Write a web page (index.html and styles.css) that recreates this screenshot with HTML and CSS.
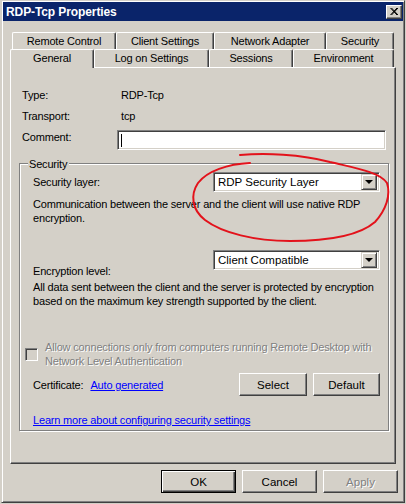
FILE: index.html
```html
<!DOCTYPE html>
<html lang="en">
<head>
    <meta charset="UTF-8">
    <title>RDP-Tcp Properties</title>
    <link rel="stylesheet" href="styles.css">
</head>
<body>
    <div class="window">
        <div class="titlebar">
            <span class="title">RDP-Tcp Properties</span>
            <span class="close-btn">
                <svg width="8" height="7" viewBox="0 0 8 7"><path d="M0.5,0 L7,7 M1.5,0 L8,7 M7,0 L0.5,7 M8,0 L1.5,7" stroke="#000" stroke-width="1" fill="none"/></svg>
            </span>
        </div>

        <div class="dialog">
            <!-- Tabs: back row and front row -->
            <div class="tabs">
                <div class="tab-row">
                    <div class="tab w-remote">Remote Control</div>
                    <div class="tab w-client">Client Settings</div>
                    <div class="tab w-network">Network Adapter</div>
                    <div class="tab w-security">Security</div>
                </div>
                <div class="tab-row front">
                    <div class="tab active w-general">General</div>
                    <div class="tab w-logon">Log on Settings</div>
                    <div class="tab w-sessions">Sessions</div>
                    <div class="tab w-env">Environment</div>
                </div>
            </div>

            <div class="panel">
                <div class="info-grid">
                    <span>Type:</span><span class="value">RDP-Tcp</span>
                    <span>Transport:</span><span class="value">tcp</span>
                    <span>Comment:</span>
                    <div class="field"><span class="caret"></span></div>
                </div>

                <div class="group">
                    <span class="group-title">Security</span>

                    <div class="row">
                        <span>Security layer:</span>
                        <div class="combo">
                            <span class="combo-text">RDP Security Layer</span>
                            <span class="drop"><span class="arrow"></span></span>
                        </div>
                    </div>
                    <p class="desc">Communication between the server and the client will use native RDP<br>encryption.</p>

                    <div class="row row-low">
                        <span class="low-label">Encryption level:</span>
                        <div class="combo">
                            <span class="combo-text">Client Compatible</span>
                            <span class="drop"><span class="arrow"></span></span>
                        </div>
                    </div>
                    <p class="desc desc-tight">All data sent between the client and the server is protected by encryption<br>based on the maximum key strength supported by the client.</p>

                    <div class="check">
                        <span class="box"></span>
                        <span class="disabled-text">Allow connections only from computers running Remote Desktop with<br>Network Level Authentication</span>
                    </div>

                    <div class="cert-row">
                        <span>Certificate:</span>
                        <a href="#" class="link cert-link">Auto generated</a>
                        <button class="btn btn-select">Select</button>
                        <button class="btn btn-default">Default</button>
                    </div>

                    <a href="#" class="link learn">Learn more about configuring security settings</a>
                </div>
            </div>

            <div class="actions">
                <button class="btn btn-ok">OK</button>
                <button class="btn">Cancel</button>
                <button class="btn btn-disabled">Apply</button>
            </div>
        </div>
    </div>

    <!-- red marker circle drawn over the screenshot -->
    <svg class="scribble" width="406" height="504" viewBox="0 0 406 504">
        <path d="M240,155 C265,153 300,154 330,162 C355,168 380,172 387,183 C391,195 386,210 375,222 C360,235 330,241 290,241 C255,241 222,233 205,220 C192,210 190,195 198,183 C207,171 228,164 250,163" stroke="#e3121b" stroke-width="2" fill="none" stroke-linecap="round"/>
    </svg>
</body>
</html>
```

FILE: styles.css
```css
body {
    margin: 0;
    position: relative;
    background: #d4d0c8;
    font-family: 'Liberation Sans', Arial, sans-serif;
    font-size: 11px;
    line-height: 14px;
    letter-spacing: -0.18px;
    color: #000;
}
.window {
    margin-left: 1px;
    width: 404px;
    height: 503px;
    box-sizing: border-box;
    border: 1px solid;
    border-color: #d4d0c8 #404040 #404040 #d4d0c8;
    box-shadow: inset 1px 1px 0 #fff, inset -1px -1px 0 #808080;
    padding: 1px;
    background: #d4d0c8;
}
.titlebar {
    height: 19px;
    background: #0a246a;
    display: flex;
    align-items: center;
    justify-content: space-between;
    padding: 0 1px 0 3px;
}
.title {
    color: #fff;
    font-weight: bold;
    font-size: 12px;
    letter-spacing: -0.1px;
}
.close-btn {
    width: 16px;
    height: 14px;
    box-sizing: border-box;
    background: #d4d0c8;
    border: 1px solid;
    border-color: #fff #404040 #404040 #fff;
    box-shadow: inset -1px -1px 0 #808080;
    display: flex;
    align-items: center;
    justify-content: center;
}
.close-btn svg {
    display: block;
    margin: 0 1px 1px 0;
}
.dialog {
    padding: 11px 5px 0 7px;
}

/* tabs */
.tab-row {
    display: flex;
    height: 17px;
    padding-left: 2px;
}
.tab-row.front {
    height: 18px;
    padding-left: 0;
    position: relative;
    z-index: 1;
}
.tab {
    box-sizing: border-box;
    height: 100%;
    border-top: 1px solid #fff;
    border-left: 1px solid #fff;
    border-right: 1px solid #404040;
    border-radius: 2px 2px 0 0;
    box-shadow: inset -1px 0 0 #808080;
    text-align: center;
    line-height: 17px;
}
.tab.active {
    height: 19px;
    padding-top: 1px;
    line-height: 14px;
    background: #d4d0c8;
}
.w-remote { width: 104px; }
.w-client { width: 98px; }
.w-network { width: 112px; }
.w-security { width: 68px; }
.w-general { width: 84px; }
.w-logon { width: 115px; }
.w-sessions { width: 84px; }
.w-env { width: 101px; }

/* page panel */
.panel {
    box-sizing: border-box;
    width: 386px;
    height: 397px;
    border: 1px solid;
    border-color: #fff #404040 #404040 #fff;
    box-shadow: inset -1px -1px 0 #808080;
    padding: 0 6px 0 8px;
}
.info-grid {
    display: grid;
    grid-template-columns: 95px 269px;
    row-gap: 7px;
    padding: 20px 0 0 3px;
}
.value {
    padding-left: 4px;
}
.field {
    box-sizing: border-box;
    height: 20px;
    background: #fff;
    border: 1px solid;
    border-color: #808080 #fff #fff #808080;
    box-shadow: inset 1px 1px 0 #404040, inset -1px -1px 0 #d4d0c8;
    padding: 3px 0 0 3px;
}
.caret {
    display: block;
    width: 1px;
    height: 13px;
    background: #000;
}

/* group box */
.group {
    margin-top: 13px;
    width: 370px;
    box-sizing: border-box;
    border: 1px solid #808080;
    box-shadow: inset 1px 1px 0 #fff, 1px 1px 0 #fff;
    padding: 0 8px 3px 13px;
}
.group-title {
    display: block;
    width: fit-content;
    margin: -7px 0 0 -5px;
    padding: 0 2px 0 1px;
    background: #d4d0c8;
}
.row {
    display: flex;
    align-items: center;
    justify-content: space-between;
    margin-top: 1px;
}
.row-low {
    align-items: flex-start;
    margin-top: 25px;
}
.low-label {
    margin-top: 14px;
}
.combo {
    box-sizing: border-box;
    width: 167px;
    height: 20px;
    background: #fff;
    border: 1px solid;
    border-color: #808080 #fff #fff #808080;
    box-shadow: inset 1px 1px 0 #404040, inset -1px -1px 0 #d4d0c8;
    padding: 2px 2px 2px 4px;
    display: flex;
    align-items: center;
    justify-content: space-between;
    font-size: 11.5px;
    letter-spacing: 0;
}
.drop {
    box-sizing: border-box;
    width: 16px;
    height: 16px;
    background: #d4d0c8;
    border: 1px solid;
    border-color: #d4d0c8 #404040 #404040 #d4d0c8;
    box-shadow: inset 1px 1px 0 #fff, inset -1px -1px 0 #808080;
    display: flex;
    align-items: center;
    justify-content: center;
}
.arrow {
    width: 0;
    height: 0;
    border-left: 4px solid transparent;
    border-right: 4px solid transparent;
    border-top: 4px solid #000;
}
.desc {
    margin: 5px 0 0;
    white-space: nowrap;
}
.desc-tight {
    margin-top: 2px;
}
.check {
    display: flex;
    align-items: center;
    gap: 7px;
    margin: 32px 0 0 -8px;
}
.box {
    width: 13px;
    height: 13px;
    box-sizing: border-box;
    border: 1px solid;
    border-color: #808080 #fff #fff #808080;
    box-shadow: inset 1px 1px 0 #404040, inset -1px -1px 0 #d4d0c8;
    flex: none;
}
.disabled-text {
    color: #808080;
    text-shadow: 1px 1px 0 #fff;
    white-space: nowrap;
}
.cert-row {
    display: flex;
    align-items: center;
    margin-top: 5px;
}
.link {
    color: #0000ff;
    text-decoration: underline;
}
.cert-link {
    margin-left: 7px;
}
.learn {
    display: block;
    margin-top: 17px;
}

/* buttons */
.btn {
    box-sizing: border-box;
    height: 23px;
    width: 75px;
    padding: 0;
    font-family: inherit;
    font-size: 11.5px;
    color: #000;
    background: #d4d0c8;
    border: 1px solid;
    border-color: #fff #404040 #404040 #fff;
    box-shadow: inset -1px -1px 0 #808080;
}
.btn-select {
    width: 68px;
    margin-left: auto;
}
.btn-default {
    width: 67px;
    margin-left: 6px;
}
.btn-ok {
    border-color: #000;
    box-shadow: inset 1px 1px 0 #fff, inset -1px -1px 0 #404040, inset -2px -2px 0 #808080;
}
.btn-disabled {
    color: #808080;
    text-shadow: 1px 1px 0 #fff;
}
.actions {
    display: flex;
    justify-content: flex-end;
    gap: 6px;
    margin-top: 6px;
}

.scribble {
    position: absolute;
    left: 0;
    top: 0;
    pointer-events: none;
}
```
